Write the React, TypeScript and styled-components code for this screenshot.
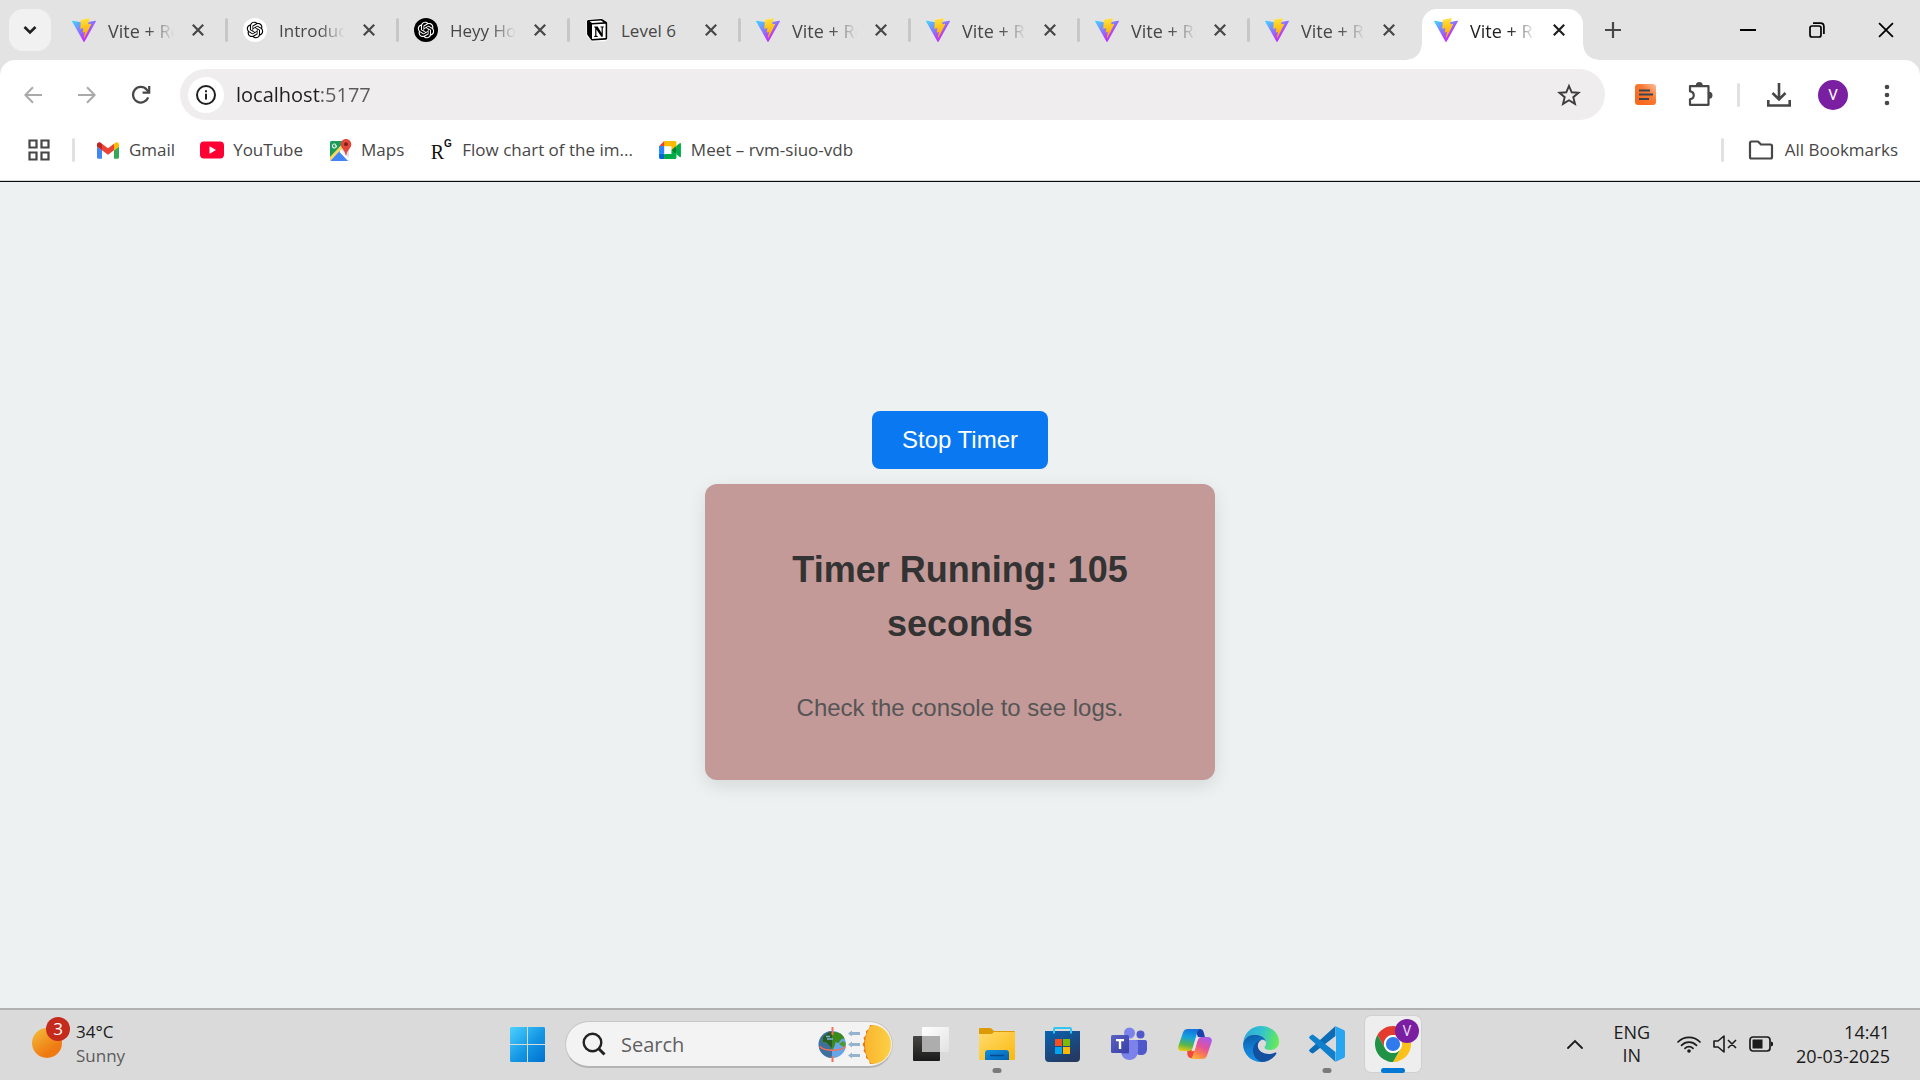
import React, { useEffect, useState } from 'react';
import styled, { createGlobalStyle, css } from 'styled-components';
import { RiOpenaiFill } from 'react-icons/ri';

const ui = `'Open Sans', 'Noto Sans', sans-serif`;
const arial = `'Liberation Sans', Arial, sans-serif`;

const GlobalStyle = createGlobalStyle`
  * { box-sizing: border-box; }
  body { margin: 0; background: #edf1f2; }
  button { border: 0; padding: 0; background: none; color: inherit; font: inherit; cursor: pointer; }
  svg { display: block; flex: none; }
`;

const Screen = styled.div`
  min-height: 100vh;
  display: flex;
  flex-direction: column;
  font-family: ${ui};
  font-size: 17px;
  line-height: 24px;
`;

/* ---------- browser frame ---------- */

const Frame = styled.header`
  background: #e3e3e3;
`;

const TabStrip = styled.div`
  display: flex;
  height: 60px;
  padding: 9px 0 0 9px;
`;

const TabSearch = styled.button`
  display: grid;
  place-items: center;
  width: 42px;
  height: 42px;
  margin-right: 6px;
  border-radius: 14px;
  background: #f1f1f1;
`;

const Tabs = styled.nav`
  display: flex;
`;

const tabCurve = css`
  content: '';
  position: absolute;
  bottom: 0;
  width: 15px;
  height: 15px;
`;

const Tab = styled.div<{ $width: number; $active?: boolean; $divider?: boolean }>`
  position: relative;
  display: flex;
  align-items: center;
  width: ${(p) => p.$width}px;
  height: 51px;
  padding: 0 22px 9px 15px;
  color: #474747;
  ${(p) =>
    p.$divider &&
    css`
      padding-right: 0;
      &::after {
        content: '';
        width: 3px;
        height: 24px;
        margin-left: 19px;
        border-radius: 2px;
        background: #c7c7c7;
      }
    `}
  ${(p) =>
    p.$active &&
    css`
      margin-left: 3px;
      padding: 0 16px 9px 12px;
      border-radius: 15px 15px 0 0;
      background: #fff;
      color: #1f1f1f;
      &::before {
        ${tabCurve}
        left: -15px;
        background: radial-gradient(circle at 0 0, transparent 14px, #fff 15px);
      }
      &::after {
        ${tabCurve}
        right: -15px;
        background: radial-gradient(circle at 100% 0, transparent 14px, #fff 15px);
      }
    `}
`;

const TabTitle = styled.span<{ $fade: boolean; $small?: boolean }>`
  flex: 1;
  min-width: 0;
  margin: 2px 16px 0 12px;
  overflow: hidden;
  white-space: nowrap;
  font-size: ${(p) => (p.$small ? 17 : 18)}px;
  ${(p) => p.$fade && css`mask-image: linear-gradient(90deg, #000 calc(100% - 26px), transparent);`}
`;

const TabClose = styled.button`
  display: grid;
  place-items: center;
  width: 16px;
  height: 24px;
`;

const NewTab = styled.button`
  display: grid;
  place-items: center;
  width: 42px;
  height: 42px;
  margin-left: 9px;
  color: #474747;
`;

const WindowControls = styled.div`
  display: flex;
  margin-left: auto;
`;

const WindowButton = styled.button`
  display: grid;
  place-items: center;
  width: 69px;
  height: 42px;
  color: #000;
`;

const Panel = styled.div`
  border-radius: 15px 15px 0 0;
  border-bottom: 1px solid #0a0d0e;
  box-shadow: inset 0 -1px #d5d7d7;
  background: #fff;
  color: #474747;
`;

const Toolbar = styled.div`
  display: flex;
  align-items: center;
  padding: 9px 6px 0;
`;

const ToolButton = styled.button<{ $dim?: boolean }>`
  display: grid;
  place-items: center;
  width: 54px;
  height: 51px;
  color: ${(p) => (p.$dim ? '#a9a9a9' : '#474747')};
`;

const Omnibox = styled.div`
  flex: 1;
  display: flex;
  align-items: center;
  height: 51px;
  margin: 0 14px 0 12px;
  padding: 0 24px 0 8px;
  border-radius: 26px;
  background: #efedee;
`;

const SiteInfo = styled.button`
  display: grid;
  place-items: center;
  width: 36px;
  height: 36px;
  border-radius: 50%;
  background: #fff;
  color: #1f1f1f;
`;

const Address = styled.input`
  flex: 1;
  min-width: 0;
  height: 36px;
  margin-left: 12px;
  padding: 0;
  border: 0;
  outline: 0;
  font: 20px/36px ${ui};
  color: #1f1f1f;
  background: linear-gradient(90deg, #1f1f1f 84px, #5a5a5a 84px);
  background-clip: text;
  -webkit-background-clip: text;
  -webkit-text-fill-color: transparent;
`;

const Rule = styled.span<{ $margin: string }>`
  width: 3px;
  height: 24px;
  margin: ${(p) => p.$margin};
  border-radius: 2px;
  background: #e1e1e1;
`;

const Avatar = styled.span`
  display: grid;
  place-items: center;
  width: 30px;
  height: 30px;
  border-radius: 50%;
  background: #7b1fa2;
  color: #fff;
  font: 15px/30px Roboto, sans-serif;
`;

const BookmarkBar = styled.nav`
  display: flex;
  align-items: center;
  height: 61px;
  padding: 0 22px 1px 27px;
`;

const Bookmarks = styled.div`
  display: flex;
  gap: 25px;
`;

const Bookmark = styled.a`
  display: flex;
  align-items: center;
  gap: 9px;
  color: #474747;
  text-decoration: none;
  white-space: nowrap;
`;

const AllBookmarks = styled(Bookmark)`
  gap: 11px;
`;

const BookmarkIcon = styled.span`
  display: grid;
  place-items: center;
  width: 24px;
  height: 24px;
`;

/* ---------- timer page ---------- */

const Page = styled.main`
  flex: 1;
  display: flex;
  flex-direction: column;
  align-items: center;
  justify-content: center;
  gap: 15px;
  background: #edf1f2;
  font-family: ${arial};
  text-align: center;
`;

const TimerButton = styled.button`
  padding: 15px 30px;
  border-radius: 8px;
  background: #0a79f1;
  color: #fff;
  font: 24px/28px ${arial};
`;

const Card = styled.section`
  width: 510px;
  max-width: 100%;
  padding: 30px;
  border-radius: 12px;
  background: #c49a99;
  box-shadow: 0 6px 18px rgba(0, 0, 0, 0.1);
`;

const Heading = styled.h2`
  margin: 29px 45px 39px;
  color: #333;
  font-size: 36px;
  line-height: 54px;
`;

const Note = styled.p`
  margin: 0 0 24px;
  color: #555;
  font-size: 24px;
  line-height: 36px;
`;

/* ---------- taskbar ---------- */

const Taskbar = styled.footer`
  display: grid;
  grid-template-columns: 1fr auto 1fr;
  align-items: center;
  padding: 6px 30px 8px;
  border-top: 2px solid #b1b1b1;
  background: #dadada;
  color: #1b1b1b;
`;

const Weather = styled.button`
  justify-self: start;
  display: flex;
  gap: 14px;
  text-align: left;
  color: #1b1b1b;
`;

const SunBadge = styled.span`
  position: relative;
  width: 32px;
  height: 48px;
  padding: 8px 0 0 2px;
`;

const SunDisc = styled.span`
  display: block;
  width: 30px;
  height: 30px;
  border-radius: 50%;
  background: linear-gradient(145deg, #f2b636 10%, #f07a12 70%);
`;

const Count = styled.span`
  position: absolute;
  left: 16px;
  top: -3px;
  width: 24px;
  height: 24px;
  border-radius: 50%;
  background: #c42b1c;
  color: #fff;
  font-size: 17px;
  text-align: center;
`;

const Line = styled.span<{ $muted?: boolean }>`
  display: block;
  color: ${(p) => (p.$muted ? '#5c5c5c' : 'inherit')};
`;

const Dock = styled.div`
  display: flex;
  align-items: center;
  gap: 10px;
`;

const DockButton = styled.button<{ $mark?: 'dot' | 'bar' }>`
  position: relative;
  display: grid;
  place-items: center;
  width: 56px;
  height: 56px;
  border-radius: 6px;
  ${(p) =>
    p.$mark === 'bar' &&
    css`
      background: #eeeeee;
      box-shadow: 0 0 0 1px #d0d0d0;
    `}
  ${(p) =>
    p.$mark &&
    css`
      &::after {
        content: '';
        position: absolute;
        bottom: -1px;
        left: 50%;
        width: ${p.$mark === 'bar' ? 24 : 9}px;
        height: 5px;
        border-radius: 3px;
        transform: translateX(-50%);
        background: ${p.$mark === 'bar' ? '#0078d4' : '#7a7a7a'};
      }
    `}
`;

const Profile = styled.span`
  position: absolute;
  top: 3px;
  right: 2px;
  width: 24px;
  height: 24px;
  border-radius: 50%;
  background: #7b1fa2;
  color: #e9d6f0;
  font: 14px/24px Roboto, sans-serif;
  text-align: center;
`;

const SearchBox = styled.label`
  display: flex;
  align-items: center;
  width: 328px;
  height: 47px;
  padding: 0 0 0 16px;
  border: 1px solid #c6c6c6;
  border-bottom: 2px solid #b4b4b4;
  border-radius: 24px;
  background: #f3f3f3;
`;

const SearchInput = styled.input`
  flex: 1;
  min-width: 0;
  margin: 2px 0 0 15px;
  padding: 0;
  border: 0;
  outline: 0;
  background: none;
  font: 20px/28px ${ui};
  &::placeholder { color: #606060; opacity: 1; }
`;

const Tray = styled.div`
  justify-self: end;
  display: flex;
  align-items: center;
  font-size: 18px;
`;

const TrayButton = styled.button<{ $gap: number; $align?: string }>`
  display: flex;
  flex-direction: column;
  align-items: ${(p) => p.$align || 'center'};
  margin-left: ${(p) => p.$gap}px;
  line-height: ${(p) => (p.$align ? 24 : 23)}px;
  color: #1b1b1b;
`;

const Status = styled.button`
  display: flex;
  align-items: center;
  gap: 12px;
  margin-left: 27px;
  color: #1b1b1b;
`;

/* ---------- drawings ---------- */

const Vite = ({ id }: { id: string }) => (
  <svg width="24" height="24" viewBox="0 0 256 257">
    <defs>
      <linearGradient id={`${id}a`} x1="-.8%" x2="57.6%" y1="7.6%" y2="78.4%">
        <stop offset="0" stopColor="#41D1FF" />
        <stop offset="1" stopColor="#BD34FE" />
      </linearGradient>
      <linearGradient id={`${id}b`} x1="43.4%" x2="50.3%" y1="2.2%" y2="89%">
        <stop offset="0" stopColor="#FFEA83" />
        <stop offset=".083" stopColor="#FFDD35" />
        <stop offset="1" stopColor="#FFA800" />
      </linearGradient>
    </defs>
    <path fill={`url(#${id}a)`} d="M255.153 37.938L134.897 252.976c-2.483 4.44-8.862 4.466-11.382.048L.875 37.958c-2.746-4.814 1.371-10.646 6.827-9.67l120.385 21.517a6.537 6.537 0 0 0 2.322-.004l117.867-21.483c5.438-.991 9.574 4.796 6.877 9.62Z" />
    <path fill={`url(#${id}b)`} d="M185.432.063L96.44 17.501a3.268 3.268 0 0 0-2.634 3.014l-5.474 92.456a3.268 3.268 0 0 0 3.997 3.378l24.777-5.718c2.318-.535 4.413 1.507 3.936 3.838l-7.361 36.047c-.495 2.426 1.782 4.5 4.151 3.78l15.304-4.649c2.372-.72 4.652 1.36 4.15 3.788l-11.698 56.621c-.732 3.542 3.979 5.473 5.943 2.437l1.313-2.028l72.516-144.72c1.215-2.423-.88-5.186-3.54-4.672l-25.505 4.922c-2.396.462-4.435-1.77-3.759-4.114l16.646-57.705c.677-2.35-1.37-4.583-3.769-4.113Z" />
  </svg>
);

const OpenAiDisc = styled.span<{ $dark?: boolean }>`
  display: grid;
  place-items: center;
  flex: none;
  width: 24px;
  height: 24px;
  border-radius: 50%;
  background: ${(p) => (p.$dark ? '#000' : '#fff')};
  color: ${(p) => (p.$dark ? '#fff' : '#000')};
`;

const Notion = () => (
  <svg width="24" height="24" viewBox="0 0 24 24">
    <path d="M1.5 3 3 1.2 16.6.6 22.5 4v17.6L20.5 23.2 7 23.6 1.5 18Z" fill="#fff" />
    <path d="M2 3.2C2 2.4 2.6 2 3.4 1.9L15.9 1c1-.1 1.5.1 2.3.7l3.1 2.1c.7.5.9.8.9 1.5v14.8c0 1-.4 1.6-1.6 1.7L8 22.6c-1 .1-1.5-.2-2-.9l-3-4c-.6-.8-.9-1.3-.9-2Z" fill="#000" />
    <path d="M4.5 3.2 16 2.4l2.6 1.8L7 4.9Z" fill="#fff" />
    <path d="M7 6.6 20.6 5.8V20L7 20.9Z" fill="#fff" />
    <path d="M9.3 8.6h3.3l4 6.4V9.6l-1.2-.3v-.9h3.4v.9l-1 .4v9h-1.5L11.4 11.5v6.3l1.3.3v.8H9.2v-.8l1-.4V9.7l-.9-.3Z" fill="#000" />
  </svg>
);

const Cross = ({ size = 12, width = 2.2 }: { size?: number; width?: number }) => (
  <svg width={size} height={size} viewBox="0 0 12 12" stroke="currentColor" strokeWidth={width}>
    <path d="M.8.8 11.2 11.2M11.2.8.8 11.2" />
  </svg>
);

const Maps = () => (
  <svg width="23" height="24" viewBox="0 0 23 24">
    <clipPath id="mapTile"><rect x="1" y="3" width="19" height="20" rx="1.5" /></clipPath>
    <g clipPath="url(#mapTile)">
      <rect x="1" y="3" width="19" height="20" fill="#dfe3e6" />
      <path d="M1 3h19L1 22Z" fill="#1b9d58" />
      <path d="M1 23 10.5 13 20 23Z" fill="#4285f4" />
      <path d="M0 20 18 1l2 2L1 23Z" fill="#fdd85d" />
      <path d="m12 12 9 9v3h-1l-9.500-10Z" fill="#fff" />
    </g>
    <path d="M7.9 7.3H5.7v.9h1.2a1.5 1.5 0 1 1-.4-1.3l.7-.7a2.5 2.5 0 1 0 .7 1.5Z" fill="#fff" />
    <path d="M17 1c3 0 5.3 2.3 5.3 5.2 0 4-4.3 5.5-4.9 11h-.8c-.6-5.5-4.9-7-4.9-11C11.7 3.3 14 1 17 1Z" fill="#e0483b" />
    <circle cx="17" cy="6.2" r="1.9" fill="#7d1f18" />
  </svg>
);

const Gmail = () => (
  <svg width="22" height="17" viewBox="52 42 88 66">
    <path fill="#4285f4" d="M58 108h14V74L52 59v43c0 3.32 2.69 6 6 6" />
    <path fill="#34a853" d="M120 108h14c3.32 0 6-2.69 6-6V59l-20 15" />
    <path fill="#fbbc04" d="M120 48v26l20-15v-8c0-7.42-8.47-11.65-14.4-7.2" />
    <path fill="#ea4335" d="M72 74V48l24 18 24-18v26L96 92" />
    <path fill="#c5221f" d="M52 51v8l20 15V48l-5.6-4.2c-5.94-4.45-14.4-.22-14.4 7.2" />
  </svg>
);

const YouTube = () => (
  <svg width="24" height="18" viewBox="0 0 24 18">
    <rect width="24" height="17" y=".5" rx="4" fill="#ff0033" />
    <path d="M9.5 5.3 16 9l-6.5 3.7Z" fill="#fff" />
  </svg>
);

const Meet = () => (
  <svg width="22" height="18" viewBox="0 0 87.5 72">
    <path fill="#00832d" d="M49.5 36l8.53 9.75 11.47 7.33 2-17.02-2-16.64-11.69 6.44z" />
    <path fill="#0066da" d="M0 51.5V66c0 3.315 2.685 6 6 6h14.5l3-10.96-3-9.54-9.95-3z" />
    <path fill="#e94235" d="M20.5 0L0 20.5l10.55 3 9.95-3 2.95-9.41z" />
    <path fill="#2684fc" d="M20.5 20.5H0v31h20.5z" />
    <path fill="#00ac47" d="M82.6 8.68L69.5 19.42v33.66l13.16 10.79c1.97 1.54 4.85.135 4.85-2.37V11c0-2.535-2.945-3.925-4.91-2.32zM49.5 36v15.5h-29V72h43c3.315 0 6-2.685 6-6V53.08z" />
    <path fill="#ffba00" d="M63.5 0h-43v20.5h29V36l20-16.57V6c0-3.315-2.685-6-6-6z" />
  </svg>
);

const Research = styled.span`
  display: flex;
  align-items: flex-start;
  color: #111;
  font: 20px/28px 'Liberation Serif', serif;
  sup { font: 700 10px/12px ${arial}; }
`;

const Windows = () => (
  <svg width="35" height="35" viewBox="0 0 35 35">
    <defs>
      <linearGradient id="win" x1="0" y1="0" x2="1" y2="1">
        <stop offset="0" stopColor="#4cd2ff" />
        <stop offset=".55" stopColor="#1496e4" />
        <stop offset="1" stopColor="#0070cf" />
      </linearGradient>
    </defs>
    <path fill="url(#win)" d="M1 0h16v17H0V1ZM18 0h16l1 1v16H18ZM0 18h17v17H1l-1-1ZM18 18h17v16l-1 1H18Z" />
  </svg>
);

const SearchArt = () => (
  <svg width="76" height="40" viewBox="0 0 76 40">
    <defs>
      <linearGradient id="sunArt" x1="0" x2="1"><stop offset="0" stopColor="#f9b52c" /><stop offset="1" stopColor="#fdd047" /></linearGradient>
    </defs>
    <circle cx="16.5" cy="20.5" r="13.5" fill="#66a5e6" />
    <path d="M16 7a13.5 13.5 0 0 0 0 27Z" fill="#3f6f9c" />
    <path d="M7 13c3-3 8-5.5 12-5 5 .4 8 3 9.5 6.5l-3 .5-3 4-3-1-1 4-2.5 5-2-5-5-4-3 1Z" fill="#3c8a1d" />
    <path d="M7 13c3-3 6-5 9-5.5V24l-2-2-4-4-3 0Z" fill="#275c22" />
    <path d="m23 20 4-3 2.500 2-.5 4-3-1Z" fill="#4f9a20" />
    <path d="M10 12.5h4M11 15h6" stroke="#7fb3dd" strokeWidth="1.5" />
    <path d="M3.5 22.5C9 27.5 24 27.5 29.5 22.5" fill="none" stroke="#f2705a" strokeWidth="1.5" />
    <path d="M16.5 3v8M16.5 32v6" stroke="#f2705a" strokeWidth="2" />
    <path d="m32 9.5 4-3V8h8v3h-8v1.5ZM32 20.5l4-3V19h8v3h-8v1.5ZM32 31.5l4-3V30h8v3h-8v1.5Z" fill="#93b3cf" />
    <path d="M54 1h4v39h-4l-1-4-3-2 0-4-2.5-3 1-3-2-3.5 2-3.5-1-3 2.5-3 0-4 3-2Z" fill="#ea7a13" />
    <path d="M55 1.5C64-.5 75 8 75 20.5S64 41.5 55 39.5C47 30 47 11 55 1.5Z" fill="url(#sunArt)" />
  </svg>
);

const TaskView = () => (
  <svg width="36" height="36" viewBox="0 0 36 36">
    <defs>
      <linearGradient id="tvDark" x1="0" y1="0" x2="0" y2="1"><stop offset="0" stopColor="#484644" /><stop offset="1" stopColor="#1a1a1a" /></linearGradient>
      <linearGradient id="tvLight" x1="0" y1="0" x2="1" y2="1"><stop offset="0" stopColor="#fff" /><stop offset="1" stopColor="#e2e2e2" /></linearGradient>
    </defs>
    <rect x="0" y="10" width="27" height="25" rx="1" fill="url(#tvDark)" />
    <rect x="9" y="1" width="27" height="25" rx="1" fill="url(#tvLight)" />
    <path d="M9 10h18v16H9Z" fill="#adadad" />
  </svg>
);

const Explorer = () => (
  <svg width="36" height="34" viewBox="0 0 36 34">
    <defs>
      <linearGradient id="fold" x1="0" y1="0" x2="1" y2="1"><stop offset="0" stopColor="#ffdc6e" /><stop offset="1" stopColor="#fbb80e" /></linearGradient>
      <linearGradient id="foldBlue" x1="0" y1="0" x2="1" y2="1"><stop offset="0" stopColor="#1390dd" /><stop offset="1" stopColor="#0262b5" /></linearGradient>
    </defs>
    <path d="M0 2q0-1 1-1h10q1 0 2 1l2 2h20q1 0 1 1v8H0Z" fill="#dc9b03" />
    <path d="M0 7h12q1 0 2-1l1-1h21v27q0 1-1 1H1q-1 0-1-1Z" fill="url(#fold)" />
    <path d="M6 33v-7q0-3 3-3h18q3 0 3 3v7Z" fill="url(#foldBlue)" />
    <path d="M11 28.5h14" stroke="#064b8c" strokeWidth="1.5" />
  </svg>
);

const Store = () => (
  <svg width="36" height="36" viewBox="0 0 36 36">
    <defs><linearGradient id="bag" x1="0" y1="0" x2=".6" y2="1"><stop offset="0" stopColor="#0864b2" /><stop offset="1" stopColor="#243a63" /></linearGradient></defs>
    <path d="M0 5h35v27q0 4-4 4H4q-4 0-4-4Z" fill="url(#bag)" />
    <path d="M9 7.5V3q0-1 1-1h15q1 0 1 1v4.5" fill="none" stroke="#32c4f2" strokeWidth="2" />
    <path d="M10 13h7v7h-7Z" fill="#f25022" />
    <path d="M18 13h7v7h-7Z" fill="#7fba00" />
    <path d="M10 21h7v7h-7Z" fill="#00a4ef" />
    <path d="M18 21h7v7h-7Z" fill="#ffb900" />
  </svg>
);

const Teams = () => (
  <svg width="36" height="34" viewBox="0 0 36 34">
    <defs><linearGradient id="teamTile" x1="0" y1="0" x2="1" y2="1"><stop offset="0" stopColor="#5a62c4" /><stop offset="1" stopColor="#393fa6" /></linearGradient></defs>
    <circle cx="29.5" cy="7.5" r="4" fill="#5059c9" />
    <path d="M24 13h10q2 0 2 2v7c0 4-2.5 6-6 6s-6-2-6-6Z" fill="#5059c9" />
    <circle cx="18.5" cy="6" r="5.5" fill="#7b83eb" />
    <path d="M10 13h15q2 0 2 2v9c0 5-3.5 9-8.5 9S10 29 10 24Z" fill="#7b83eb" />
    <path d="M10 10h8v17h-7l-1-3Z" fill="#545bc0" opacity=".6" />
    <rect x="0" y="8" width="18" height="18" rx="1.5" fill="url(#teamTile)" />
    <path d="M5 12h8v2.3h-2.8V22H7.8v-7.7H5Z" fill="#fff" />
  </svg>
);

const Copilot = () => (
  <svg width="34" height="32" viewBox="0 0 34 32">
    <defs>
      <linearGradient id="cpA" x1=".4" y1="0" x2=".2" y2="1">
        <stop offset="0" stopColor="#1474e0" /><stop offset=".35" stopColor="#14a3dc" /><stop offset=".7" stopColor="#58b54b" /><stop offset="1" stopColor="#f0cb16" />
      </linearGradient>
      <linearGradient id="cpB" x1=".8" y1="0" x2=".3" y2="1">
        <stop offset="0" stopColor="#a35cf0" /><stop offset=".45" stopColor="#e2519c" /><stop offset=".75" stopColor="#fb7b52" /><stop offset="1" stopColor="#fdb13f" />
      </linearGradient>
    </defs>
    <path d="M17 1h5c2 0 3 1 3.6 3L27 9h-7Z" fill="#1a3fae" />
    <path d="M9 22h7l2 8h-5c-2 0-3-1-3.5-3Z" fill="#ee4a3a" />
    <path d="M10 1h12c-1.5.5-2.5 2-3 4l-4.3 14.5C14 22 13 23 10.5 23H4c-3 0-4.5-2-3.6-5L5 4.5C5.8 2 7.5 1 10 1Z" fill="url(#cpA)" />
    <path d="M24 31H12c1.5-.5 2.5-2 3-4l4.3-14.5C20 10 21 9 23.5 9H30c3 0 4.5 2 3.6 5L29 27.5C28.2 30 26.5 31 24 31Z" fill="url(#cpB)" />
    <path d="M19.3 9.500h3.2c-1.7.6-2.5 1.6-3 3.3l-2.5 8.700c-.4 1.2-1 1.7-2.3 1.700h-1.500c1-.8 1.400-1.600 1.800-3l2.400-8c.4-1.500.9-2.300 1.900-2.700Z" fill="#e9e4e4" />
  </svg>
);

const Edge = () => (
  <svg width="36" height="36" viewBox="0 0 36 36">
    <defs>
      <linearGradient id="edA" x1="0" y1=".3" x2="1" y2=".5"><stop offset="0" stopColor="#2ba7dc" /><stop offset=".5" stopColor="#33c4cf" /><stop offset="1" stopColor="#66ea55" /></linearGradient>
      <linearGradient id="edB" x1=".3" y1="0" x2=".5" y2="1"><stop offset="0" stopColor="#0b5fa8" /><stop offset=".5" stopColor="#127fd4" /><stop offset="1" stopColor="#1a90e0" /></linearGradient>
    </defs>
    <path d="M.3 16C1.5 6.5 9 0 18 0c10.5 0 18 7.5 18 15.5C36 21 32 24 27.5 24c-3.8 0-6-1-6-2.2 0-1.2 1.6-1.8 1.6-5C23 12 18 8.7 12 8.7 6 8.7 1.5 12 .3 16Z" fill="url(#edA)" />
    <path d="M0 18C.8 12 6 8.7 11.8 8.7c6.2 0 10.5 3 11.2 7-1.5-2-3.5-2.200-5-1.700-2.5 1-4 4-4 7.500 0 6 6 12 13 12.200-2.500 1.600-5.500 2.300-9 2.300C8 36 0 28 0 18Z" fill="url(#edB)" />
    <path d="M18.5 14c-5.5 1-8.5 5.5-8.5 10.5 0 5.5 4 10.5 9.5 11.4C26 35.5 31 32 33.3 27.8c.6-1-.2-1.7-1.2-1.2-6.500 3.200-17 .5-17.300-6.600-.1-2.500 1.200-5 3.700-6Z" fill="#1450a0" />
  </svg>
);

const VsCode = () => (
  <svg width="36" height="36" viewBox="0 0 36 36">
    <path d="M.6 23.5q-1 1 0 2L2.5 27q1 .8 2 0L26.5 10V0Z" fill="#0a6db5" />
    <path d="M.6 12.5q-1-1 0-2L2.5 9q1-.8 2 0l22 17v10Z" fill="#1080cc" />
    <path d="M26 0 34.8 4q1.2.6 1.2 2v24q0 1.4-1.2 2L26 36q1 0 1-1.5v-33Q27 0 26 0Z" fill="#27a5f0" />
  </svg>
);

const Chrome = () => (
  <svg width="36" height="36" viewBox="2 2 44 44">
    <circle cx="24" cy="24" r="12" fill="#fff" />
    <path fill="#e33b2e" d="M24 13H43.05A22 22 0 0 0 4.95 13L14.47 29.5A11 11 0 0 1 24 13Z" />
    <path fill="#fcc21b" d="M43.05 13A22 22 0 0 1 24 46L33.53 29.5A11 11 0 0 0 24 13Z" />
    <path fill="#1f9245" d="M4.95 13A22 22 0 0 0 24 46L33.53 29.5A11 11 0 0 1 14.47 29.5Z" />
    <circle cx="24" cy="24" r="11" fill="#fff" />
    <circle cx="24" cy="24" r="8.7" fill="#2f7bee" />
  </svg>
);

/* ---------- content ---------- */

const tabs = [
  { icon: <Vite id="v1" />, title: 'Vite + React', width: 171 },
  { icon: <OpenAiDisc><RiOpenaiFill size={20} /></OpenAiDisc>, title: 'Introduction', width: 171, small: true },
  { icon: <OpenAiDisc $dark><RiOpenaiFill size={20} /></OpenAiDisc>, title: 'Heyy How', width: 171, small: true },
  { icon: <Notion />, title: 'Level 6', width: 171, small: true },
  { icon: <Vite id="v5" />, title: 'Vite + React', width: 170 },
  { icon: <Vite id="v6" />, title: 'Vite + React', width: 169 },
  { icon: <Vite id="v7" />, title: 'Vite + React', width: 170 },
  { icon: <Vite id="v8" />, title: 'Vite + React', width: 169 },
  { icon: <Vite id="v9" />, title: 'Vite + React', width: 161 },
];

const bookmarks = [
  { icon: <Gmail />, label: 'Gmail' },
  { icon: <YouTube />, label: 'YouTube' },
  { icon: <Maps />, label: 'Maps' },
  { icon: <Research>R<sup>G</sup></Research>, label: 'Flow chart of the im...' },
  { icon: <Meet />, label: 'Meet – rvm-siuo-vdb' },
];

const dock: { name: string; icon: React.ReactNode; mark?: 'dot' | 'bar' }[] = [
  { name: 'Task view', icon: <TaskView /> },
  { name: 'File Explorer', icon: <Explorer />, mark: 'dot' },
  { name: 'Microsoft Store', icon: <Store /> },
  { name: 'Teams', icon: <Teams /> },
  { name: 'Copilot', icon: <Copilot /> },
  { name: 'Edge', icon: <Edge /> },
  { name: 'Visual Studio Code', icon: <VsCode />, mark: 'dot' },
];

function BrowserFrame() {
  const [address, setAddress] = useState('localhost:5177');
  return (
    <Frame>
      <TabStrip>
        <TabSearch aria-label="Search tabs">
          <svg width="14" height="10" viewBox="0 0 14 10" fill="none" stroke="#1f1f1f" strokeWidth="2.6"><path d="m1.5 2 5.5 5.5L12.5 2" /></svg>
        </TabSearch>
        <Tabs>
          {tabs.map((t, i) => (
            <Tab key={i} $width={t.width} $active={i === 8} $divider={i < 7}>
              {t.icon}
              <TabTitle $fade={t.title.length > 7} $small={t.small}>{t.title}</TabTitle>
              <TabClose aria-label="Close tab"><Cross /></TabClose>
            </Tab>
          ))}
        </Tabs>
        <NewTab aria-label="New tab">
          <svg width="16" height="16" viewBox="0 0 16 16" stroke="currentColor" strokeWidth="2.2"><path d="M8 0v16M0 8h16" /></svg>
        </NewTab>
        <WindowControls>
          <WindowButton aria-label="Minimise">
            <svg width="16" height="16" viewBox="0 0 16 16"><path d="M0 7h16v2H0Z" /></svg>
          </WindowButton>
          <WindowButton aria-label="Restore">
            <svg width="16" height="16" viewBox="0 0 16 16" fill="none" stroke="currentColor" strokeWidth="1.7"><rect x="1" y="4" width="11" height="11" rx="2" /><path d="M4 1.2h7.5q3.4 0 3.4 3.4V12" /></svg>
          </WindowButton>
          <WindowButton aria-label="Close"><Cross size={16} width={1.3} /></WindowButton>
        </WindowControls>
      </TabStrip>
      <Panel>
        <Toolbar>
          <ToolButton $dim aria-label="Back">
            <svg width="18" height="18" viewBox="0 0 18 18" fill="none" stroke="currentColor" strokeWidth="2"><path d="M18 9H1.5M9 1.2 1.3 9 9 16.8" /></svg>
          </ToolButton>
          <ToolButton $dim aria-label="Forward">
            <svg width="18" height="18" viewBox="0 0 18 18" fill="none" stroke="currentColor" strokeWidth="2"><path d="M0 9h16.5M9 1.2 16.7 9 9 16.8" /></svg>
          </ToolButton>
          <ToolButton aria-label="Reload">
            <svg width="20" height="20" viewBox="0 0 20 20" fill="none" stroke="currentColor" strokeWidth="2.2"><path d="M17.2 12.3A7.8 7.8 0 1 1 15.8 4.7L18 7" /><path d="M18.2 1v6.6h-6.6" /></svg>
          </ToolButton>
          <Omnibox>
            <SiteInfo aria-label="Site information">
              <svg width="22" height="22" viewBox="0 0 22 22" fill="none" stroke="currentColor" strokeWidth="2"><circle cx="11" cy="11" r="9" /><path d="M11 9.8v5.7M11 6.2v2" /></svg>
            </SiteInfo>
            <Address aria-label="Address" value={address} onChange={(e) => setAddress(e.target.value)} spellCheck={false} />
            <svg width="24" height="24" viewBox="0 0 24 24" fill="none" stroke="#3c3c3c" strokeWidth="1.9"><path d="m12 3 2.7 6.3 6.8.5-5.2 4.4 1.7 6.7-6-3.6-6 3.6 1.7-6.7-5.2-4.4 6.8-.5Z" /></svg>
          </Omnibox>
          <ToolButton aria-label="Reader extension">
            <svg width="22" height="22" viewBox="0 0 22 22">
              <defs><linearGradient id="ext" x1="1" y1="0" x2=".2" y2=".8"><stop offset="0" stopColor="#fcc0a0" /><stop offset=".5" stopColor="#fa7a34" /><stop offset="1" stopColor="#f9691c" /></linearGradient></defs>
              <rect width="21" height="21" rx="3" fill="url(#ext)" />
              <path d="M4 6.5h11M4 10.5h14M4 15h10" stroke="#3a4450" strokeWidth="2" />
            </svg>
          </ToolButton>
          <ToolButton aria-label="Extensions">
            <svg width="26" height="26" viewBox="0 0 26 26" fill="none" stroke="currentColor" strokeWidth="2.2">
              <path d="M3 4.2h18.5v18.6H3v-5.5c5-.6 5-7.4 0-8Z" strokeLinejoin="round" />
              <path d="M8.8 3.5a3.5 3.5 0 0 1 7 0ZM22 9.8a3.5 3.5 0 0 1 0 7Z" fill="currentColor" stroke="none" />
            </svg>
          </ToolButton>
          <Rule $margin="0 12px 0 10px" />
          <ToolButton aria-label="Downloads">
            <svg width="26" height="26" viewBox="0 0 26 26" fill="none" stroke="currentColor" strokeWidth="2.6"><path d="M13 1v16M6.5 11l6.5 6.5 6.5-6.5M2.3 18v5.5h21.4V18" /></svg>
          </ToolButton>
          <ToolButton aria-label="Profile"><Avatar>V</Avatar></ToolButton>
          <ToolButton aria-label="Menu">
            <svg width="6" height="22" viewBox="0 0 6 22" fill="currentColor"><circle cx="3" cy="3" r="2.3" /><circle cx="3" cy="11" r="2.3" /><circle cx="3" cy="19" r="2.3" /></svg>
          </ToolButton>
        </Toolbar>
        <BookmarkBar>
          <svg width="24" height="24" viewBox="0 0 24 24" fill="none" stroke="currentColor" strokeWidth="2.2"><path d="M2.5 2.5h7v7h-7ZM14.5 2.5h7v7h-7ZM2.5 14.5h7v7h-7ZM14.5 14.5h7v7h-7Z" /></svg>
          <Rule $margin="0 21px" />
          <Bookmarks>
            {bookmarks.map((b) => (
              <Bookmark key={b.label} href="#"><BookmarkIcon>{b.icon}</BookmarkIcon>{b.label}</Bookmark>
            ))}
          </Bookmarks>
          <Rule $margin="0 24px 0 auto" />
          <AllBookmarks href="#">
            <svg width="26" height="24" viewBox="0 0 26 24" fill="none" stroke="currentColor" strokeWidth="2.2" strokeLinejoin="round"><path d="M2 5q0-1.5 1.5-1.5H10l3 3h9.5Q24 6.5 24 8v11q0 1.5-1.5 1.5h-19Q2 20.5 2 19Z" /></svg>
            All Bookmarks
          </AllBookmarks>
        </BookmarkBar>
      </Panel>
    </Frame>
  );
}

function TimerPage() {
  const [running, setRunning] = useState(true);
  useEffect(() => {
    document.title = 'Vite + React';
  }, []);
  return (
    <Page>
      <TimerButton onClick={() => setRunning(!running)}>{running ? 'Stop Timer' : 'Start Timer'}</TimerButton>
      <Card>
        <Heading>Timer Running: 105 seconds</Heading>
        <Note>Check the console to see logs.</Note>
      </Card>
    </Page>
  );
}

function SystemTaskbar() {
  return (
    <Taskbar>
      <Weather>
        <SunBadge><SunDisc /><Count>3</Count></SunBadge>
        <span><Line>34°C</Line><Line $muted>Sunny</Line></span>
      </Weather>
      <Dock>
        <DockButton aria-label="Start"><Windows /></DockButton>
        <SearchBox>
          <svg width="24" height="24" viewBox="0 0 24 24" fill="none" stroke="#222" strokeWidth="2.4"><circle cx="10.5" cy="10.5" r="8.8" /><path d="m16.8 16.8 5.7 5.7" strokeWidth="3" /></svg>
          <SearchInput aria-label="Search" placeholder="Search" />
          <SearchArt />
        </SearchBox>
        {dock.map((d) => (
          <DockButton key={d.name} aria-label={d.name} $mark={d.mark}>{d.icon}</DockButton>
        ))}
        <DockButton aria-label="Chrome" $mark="bar"><Chrome /><Profile>V</Profile></DockButton>
      </Dock>
      <Tray>
        <TrayButton $gap={0} aria-label="Hidden icons">
          <svg width="16" height="10" viewBox="0 0 16 10" fill="none" stroke="currentColor" strokeWidth="1.8" strokeLinecap="round"><path d="m1 9 7-7 7 7" /></svg>
        </TrayButton>
        <TrayButton $gap={30}><Line>ENG</Line><Line>IN</Line></TrayButton>
        <Status aria-label="Network, sound, battery">
          <svg width="24" height="18" viewBox="0 0 24 18" fill="none" stroke="currentColor" strokeWidth="1.7" strokeLinecap="round">
            <path d="M1 7a15.5 15.5 0 0 1 22 0M4.5 10.3a10.6 10.6 0 0 1 15 0M8 13.3a5.8 5.8 0 0 1 8 0" />
            <circle cx="12" cy="16" r="1.8" fill="currentColor" stroke="none" />
          </svg>
          <svg width="24" height="18" viewBox="0 0 24 18" fill="none" stroke="currentColor" strokeWidth="1.6" strokeLinejoin="round">
            <path d="M1 6h4l6-5v16l-6-5H1ZM15 5l8 8M23 5l-8 8" />
          </svg>
          <svg width="24" height="18" viewBox="0 0 24 18">
            <rect x="1" y="2" width="20" height="14" rx="3" fill="none" stroke="currentColor" strokeWidth="1.7" />
            <path d="M3.5 5q0-.5.5-.5h9.5v9H4q-.5 0-.5-.5ZM22 6.5l2 1v3l-2 1Z" fill="currentColor" />
          </svg>
        </Status>
        <TrayButton $gap={23} $align="flex-end"><Line>14:41</Line><Line>20-03-2025</Line></TrayButton>
      </Tray>
    </Taskbar>
  );
}

export default function App() {
  return (
    <Screen>
      <GlobalStyle />
      <BrowserFrame />
      <TimerPage />
      <SystemTaskbar />
    </Screen>
  );
}
